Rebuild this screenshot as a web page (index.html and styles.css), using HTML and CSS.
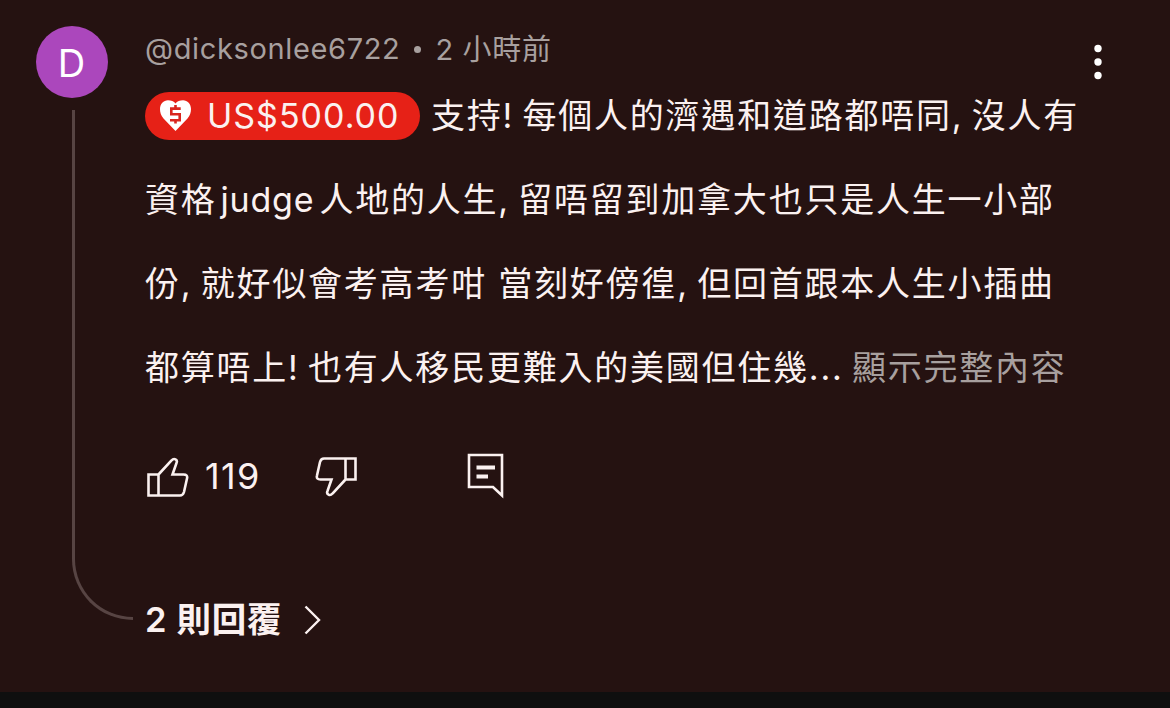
FILE: index.html
```html
<!DOCTYPE html>
<html lang="zh-Hant">
<head>
    <meta charset="UTF-8">
    <meta name="viewport" content="width=device-width, initial-scale=1.0">
    <title>留言</title>
    <link rel="stylesheet" href="styles.css">
</head>
<body>
    <article class="comment">
        <div class="side">
            <div class="avatar">D</div>
            <div class="thread"></div>
        </div>
        <div class="content">
            <div class="meta">
                <span class="author">@dicksonlee6722</span>
                <span class="dot"></span>
                <span class="time">2 小時前</span>
            </div>
            <p class="text">
                <span class="line line-1"><span class="badge"><svg class="heart" viewBox="0 0 32 32" width="32" height="32">
                    <path fill="#fff" d="M15.500 31 L3.500 18.500 C1 15.500 0 12.500 0 9 C0 4 3.500 .3 8 .3 C11 .3 14 1.500 15.500 3.500 C17 1.500 20 .3 23 .3 C27.500 .3 31 4 31 9 C31 12.500 30 15.500 27.500 18.500 Z"/>
                    <path fill="none" stroke="#d9261f" stroke-width="2.6" d="M20.700 8.600 H11.300 V14.300 H19.700 V20.200 H10 M15.500 5 V9 M15.500 20 V23.600"/>
                </svg><span class="amount">US$500.00</span></span><span class="words">支持! 每個人的濟遇和道路都唔同, 沒人有</span></span>
                <span class="line">資格<span class="latin">judge</span>人地的人生, 留唔留到加拿大也只是人生一小部</span>
                <span class="line">份, 就好似會考高考咁<span class="gap"> </span>當刻好傍徨, 但回首跟本人生小插曲</span>
                <span class="line">都算唔上! 也有人移民更難入的美國但住幾... <span class="more">顯示完整內容</span></span>
            </p>
            <div class="actions">
                <svg class="like" viewBox="0 0 42 40" width="42" height="40">
                    <path d="M1.500 17.500 H11.500 V38.500 H1.500 Z M11.500 17.500 L24.500 3.500 C27 .5 31 2.500 29.500 6 L25.500 17.500 H36.500 Q41 17.500 40 21.500 L37 35 Q36 38.500 33 38.500 H11.500"/>
                </svg>
                <span class="count">119</span>
                <svg class="dislike" viewBox="0 0 42 40" width="42" height="40">
                    <path d="M40.500 22.500 H30.500 V1.500 H40.500 Z M30.500 22.500 L17.500 36.500 C15 39.500 11 37.500 12.500 34 L16.500 22.500 H5.500 Q1 22.500 2 18.500 L5 5 Q6 1.500 9 1.500 H30.500"/>
                </svg>
                <svg class="reply" viewBox="0 0 38 46" width="38" height="46">
                    <path d="M2 2 H35 V42.500 L26 34 H2 Z"/>
                    <path class="bars" d="M9.500 14.500 H28 M9.500 23.500 H21"/>
                </svg>
            </div>
            <div class="replies">
                <span>2 則回覆</span>
                <svg class="chevron" viewBox="0 0 17 30" width="17" height="30">
                    <path d="M1.500 1.500 L15 15 L1.500 28.500"/>
                </svg>
            </div>
        </div>
        <svg class="menu" viewBox="0 0 8 36" width="8" height="36">
            <circle cx="4" cy="4.500" r="3.700"/>
            <circle cx="4" cy="18" r="3.700"/>
            <circle cx="4" cy="31.500" r="3.700"/>
        </svg>
    </article>
</body>
</html>
```
FILE: styles.css
```css
* {
    margin: 0;
    padding: 0;
    box-sizing: border-box;
}

body {
    font-family: Inter, "Noto Sans CJK TC", sans-serif;
    background: #0f0f0f;
    color: #fbf1f0;
}

svg {
    display: block;
    flex: none;
}

.comment {
    display: flex;
    height: 692px;
    padding: 26px 36px 0;
    background: #251211;
}

.side {
    display: flex;
    flex-direction: column;
    flex: none;
    width: 109px;
    height: 594px;
}

.avatar {
    display: flex;
    align-items: center;
    justify-content: center;
    width: 72px;
    height: 72px;
    border-radius: 50%;
    background: #ab47bc;
    color: #fff;
    font-size: 38px;
    padding-top: 2px;
    padding-right: 1px;
}

.thread {
    flex: 1;
    width: 61px;
    margin: 12px 0 0 36px;
    border-left: 3px solid #574443;
    border-bottom: 3px solid #574443;
    border-bottom-left-radius: 61px;
}

.content {
    width: 940px;
    flex: none;
}

.meta {
    display: flex;
    align-items: center;
    height: 48px;
    padding-bottom: 4px;
    color: #a8a09f;
    font-size: 29px;
    letter-spacing: 0.65px;
    white-space: nowrap;
}

.dot {
    width: 7px;
    height: 7px;
    margin: 3px 14px 0 14px;
    border-radius: 50%;
    background: #a8a09f;
}

.time {
    padding-bottom: 2px;
}

.text {
    font-size: 34px;
    letter-spacing: 1.77px;
    line-height: 84px;
    word-spacing: -2.9px;
}

.line {
    display: block;
    height: 84px;
    white-space: nowrap;
}

.line-1 {
    display: flex;
    align-items: center;
}

.badge {
    display: flex;
    align-items: center;
    flex: none;
    width: 275px;
    height: 48px;
    margin-right: 11px;
    padding-left: 15px;
    border-radius: 24px;
    background: #e62117;
    line-height: 48px;
}

.amount {
    margin-left: 15px;
    letter-spacing: 1px;
}

.latin {
    margin: 0 5px 0 4px;
    letter-spacing: 0.8px;
}

.gap {
    word-spacing: 0;
}

.more {
    color: #a8a09f;
}

.actions {
    display: flex;
    align-items: center;
    height: 46px;
    margin: 43px 0 0 2px;
}

.actions path {
    fill: none;
    stroke: #fbf1f0;
    stroke-width: 2.6;
}

.like,
.dislike {
    margin-top: 2px;
}

.count {
    width: 110px;
    margin-left: 16px;
    font-size: 36px;
    letter-spacing: 1.4px;
}

.reply {
    margin-left: 110px;
}

.actions .bars {
    stroke-width: 4;
}

.replies {
    display: flex;
    align-items: center;
    height: 50px;
    margin-top: 96px;
    font-size: 34.5px;
    font-weight: 600;
    letter-spacing: 0.7px;
}

.replies span {
    padding-bottom: 6px;
}

.chevron {
    margin-left: 22px;
    fill: none;
    stroke: #fbf1f0;
    stroke-width: 2.4;
}

.menu {
    margin: 18px 0 0 9px;
    fill: #fff;
}
```
